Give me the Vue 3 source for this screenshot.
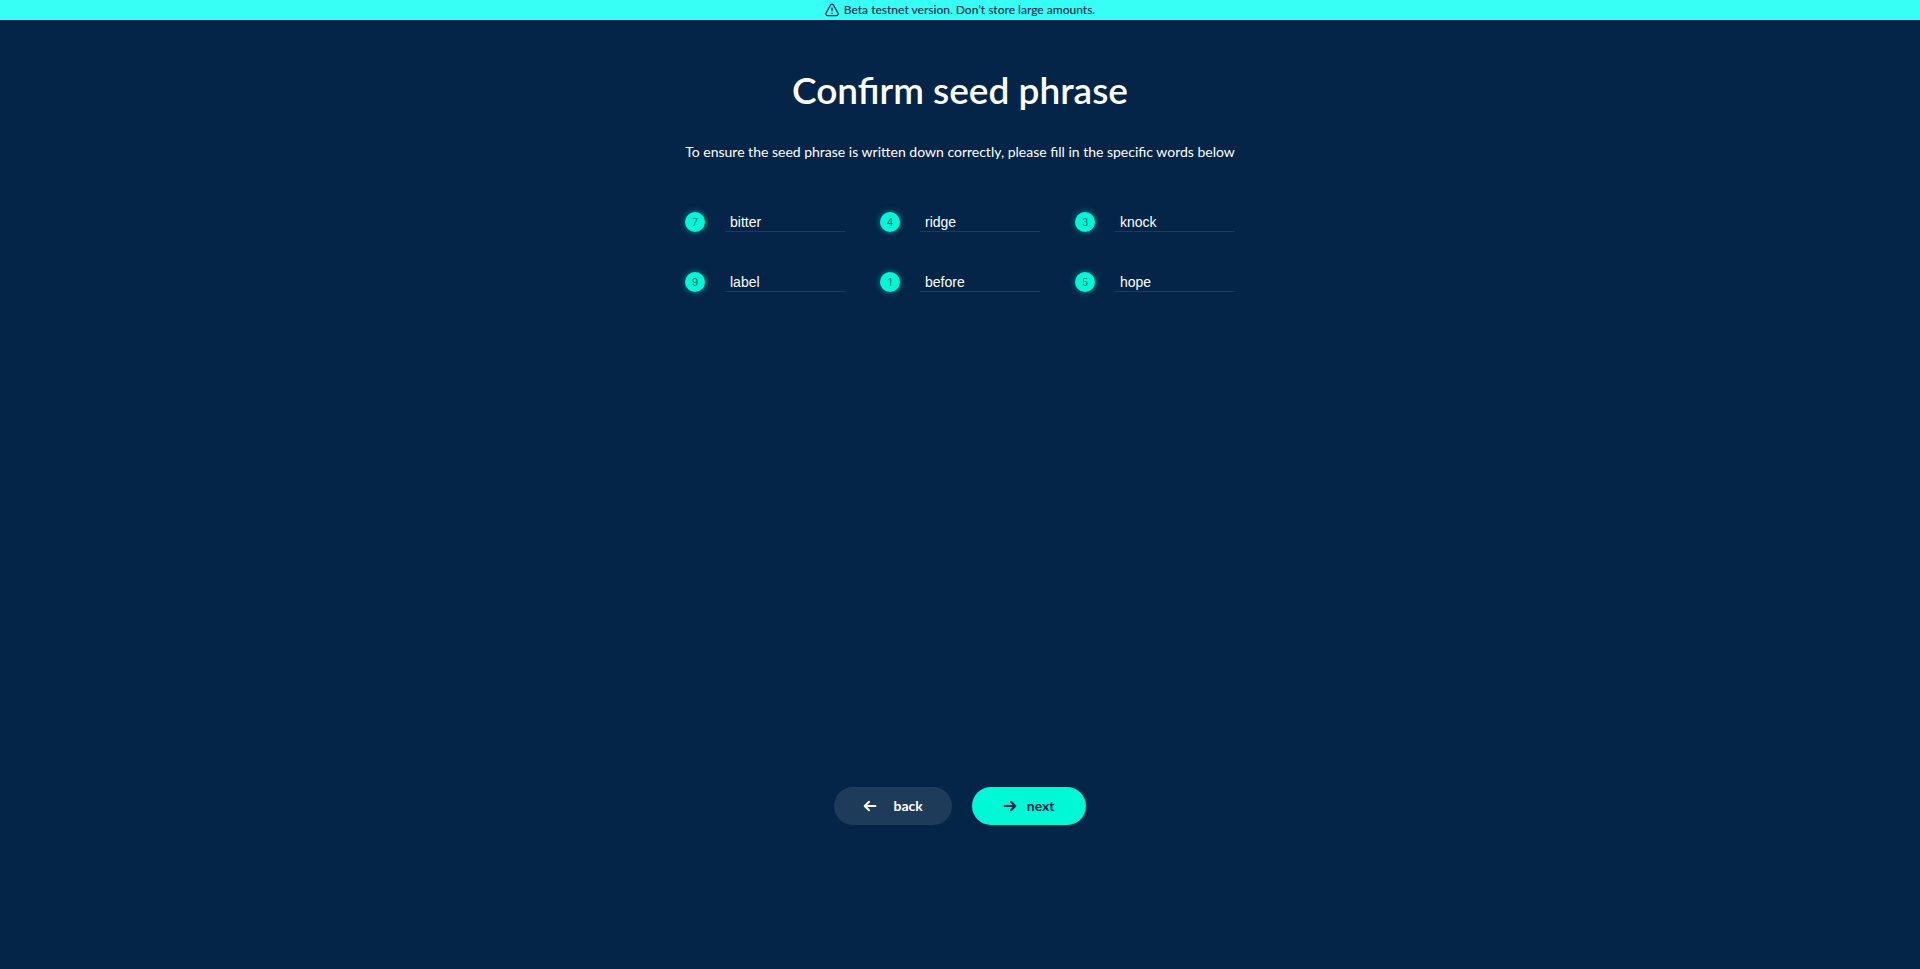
<script setup>
import { reactive } from 'vue'

const words = reactive([
  { position: 7, value: 'bitter' },
  { position: 4, value: 'ridge' },
  { position: 3, value: 'knock' },
  { position: 9, value: 'label' },
  { position: 1, value: 'before' },
  { position: 5, value: 'hope' },
])
</script>

<template>
  <div class="page">
    <header class="banner">
      <svg class="warning" viewBox="0 0 14 14" aria-hidden="true">
        <path d="M5.5 2.1 1.1 9.9C.5 11.1 1.2 12.7 2.7 12.7h8.6c1.5 0 2.2-1.6 1.6-2.8L8.5 2.1c-.7-1.2-2.3-1.2-3 0Z" />
        <path d="M7 4.6v3.6M7 9.7v1.2" />
      </svg>
      <span>Beta testnet version. Don’t store large amounts.</span>
    </header>
    <main class="content">
      <h1>Confirm seed phrase</h1>
      <p>To ensure the seed phrase is written down correctly, please fill in the specific words below</p>
      <form class="words" autocomplete="off" @submit.prevent>
        <div v-for="word in words" :key="word.position" class="word">
          <label class="number" :for="`word-${word.position}`">{{ word.position }}</label>
          <input :id="`word-${word.position}`" v-model="word.value" type="text" spellcheck="false" />
        </div>
      </form>
    </main>
    <footer class="actions">
      <button type="button" class="back">
        <svg class="arrow" viewBox="0 0 14 12" aria-hidden="true"><path d="M12.5 6H2M6 1.7 1.7 6 6 10.3" /></svg>
        back
      </button>
      <button type="button" class="next">
        <svg class="arrow" viewBox="0 0 14 12" aria-hidden="true"><path d="M1.5 6H12M8 1.7 12.3 6 8 10.3" /></svg>
        next
      </button>
    </footer>
  </div>
</template>

<style>
body {
  margin: 0;
  background: #042548;
}
</style>

<style scoped>
.page {
  display: flex;
  flex-direction: column;
  box-sizing: border-box;
  min-height: 100vh;
  padding-bottom: 144px;
  background: #042548;
  color: #fff;
  font-family: Lato, "Liberation Sans", sans-serif;
}
.banner {
  display: flex;
  align-items: center;
  justify-content: center;
  gap: 5px;
  height: 20px;
  background: #38fff5;
  color: #042548;
  font-size: 12px;
  font-weight: 500;
  line-height: 18px;
}
.warning {
  width: 14px;
  height: 14px;
  fill: none;
  stroke: currentColor;
  stroke-width: 1.2;
}
.content {
  flex: 1;
  display: flex;
  flex-direction: column;
  align-items: center;
  padding: 46px 20px 40px;
}
h1 {
  margin: 0;
  font-size: 37px;
  font-weight: 600;
  line-height: 48px;
}
p {
  margin: 28px 0 0;
  font-size: 14px;
  line-height: 20px;
}
.words {
  display: grid;
  grid-template-columns: repeat(3, minmax(0, 1fr));
  gap: 40px 35px;
  width: 100%;
  max-width: 550px;
  margin-top: 50px;
}
.word {
  display: flex;
  align-items: center;
  gap: 20px;
}
.number {
  flex: none;
  width: 20px;
  height: 20px;
  border-radius: 50%;
  background: #00f8d7;
  box-shadow: 0 0 6px rgba(0, 248, 215, 0.5);
  color: #0b6670;
  font: 10px/20px Inter, sans-serif;
  text-align: center;
}
input {
  box-sizing: border-box;
  flex: 1;
  min-width: 0;
  height: 20px;
  padding: 0 5px;
  border: 0;
  border-bottom: 1px solid #1f3b5a;
  background: transparent;
  color: #fff;
  font: 14px/19px "Liberation Sans", sans-serif;
  outline: none;
}
.actions {
  display: flex;
  justify-content: center;
  gap: 20px;
}
button {
  display: flex;
  align-items: center;
  height: 38px;
  padding: 0 29px;
  border: 0;
  border-radius: 19px;
  font: 700 14px/20px Lato, sans-serif;
  cursor: pointer;
}
.back {
  gap: 16px;
  background: #1f3b5a;
  color: #fff;
}
.next {
  gap: 10px;
  padding: 0 31px;
  background: #00f8d7;
  color: #042548;
}
.arrow {
  width: 14px;
  height: 12px;
  fill: none;
  stroke: currentColor;
  stroke-width: 2;
  stroke-linecap: round;
  stroke-linejoin: round;
}
</style>
